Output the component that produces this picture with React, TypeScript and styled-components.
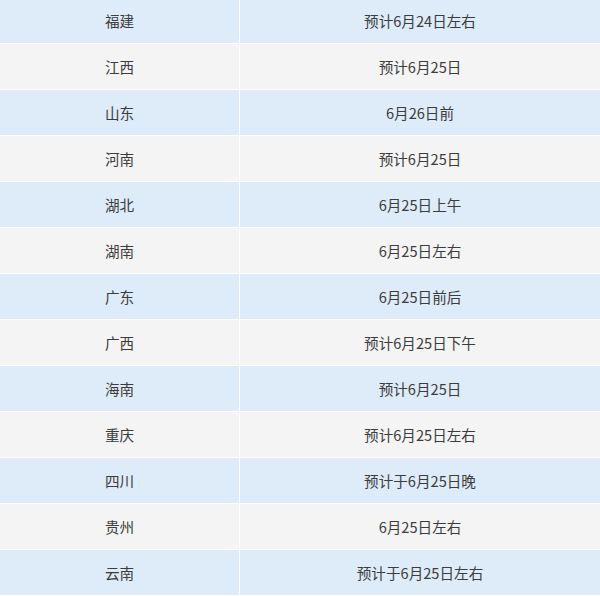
import * as React from 'react';
import styled, { createGlobalStyle } from 'styled-components';

const GlobalStyle = createGlobalStyle`
  html, body {
    margin: 0;
    padding: 0;
    background: #ffffff;
  }
  body {
    font-family: "Microsoft YaHei", "Noto Sans CJK SC", sans-serif;
  }
`;

const rows: [string, string][] = [
  ['福建', '预计6月24日左右'],
  ['江西', '预计6月25日'],
  ['山东', '6月26日前'],
  ['河南', '预计6月25日'],
  ['湖北', '6月25日上午'],
  ['湖南', '6月25日左右'],
  ['广东', '6月25日前后'],
  ['广西', '预计6月25日下午'],
  ['海南', '预计6月25日'],
  ['重庆', '预计6月25日左右'],
  ['四川', '预计于6月25日晚'],
  ['贵州', '6月25日左右'],
  ['云南', '预计于6月25日左右'],
];

const Table = styled.div`
  display: flex;
  flex-direction: column;
  gap: 1px;
  margin-top: -2px;
  width: 600px;
  background: #ffffff;
`;

const Row = styled.div<{ $alt: boolean }>`
  display: grid;
  grid-template-columns: 239px 1fr;
  column-gap: 1px;
  height: 45px;

  & > div {
    background: ${({ $alt }) => ($alt ? '#f4f4f4' : '#deebf8')};
  }
`;

const Cell = styled.div`
  display: flex;
  align-items: center;
  justify-content: center;
  font-size: 14.6px;
  color: #3c3c3c;
  white-space: nowrap;
`;

export default function App() {
  return (
    <>
      <GlobalStyle />
      <Table>
        {rows.map(([province, date], i) => (
          <Row key={province} $alt={i % 2 === 1}>
            <Cell>{province}</Cell>
            <Cell>{date}</Cell>
          </Row>
        ))}
      </Table>
    </>
  );
}
